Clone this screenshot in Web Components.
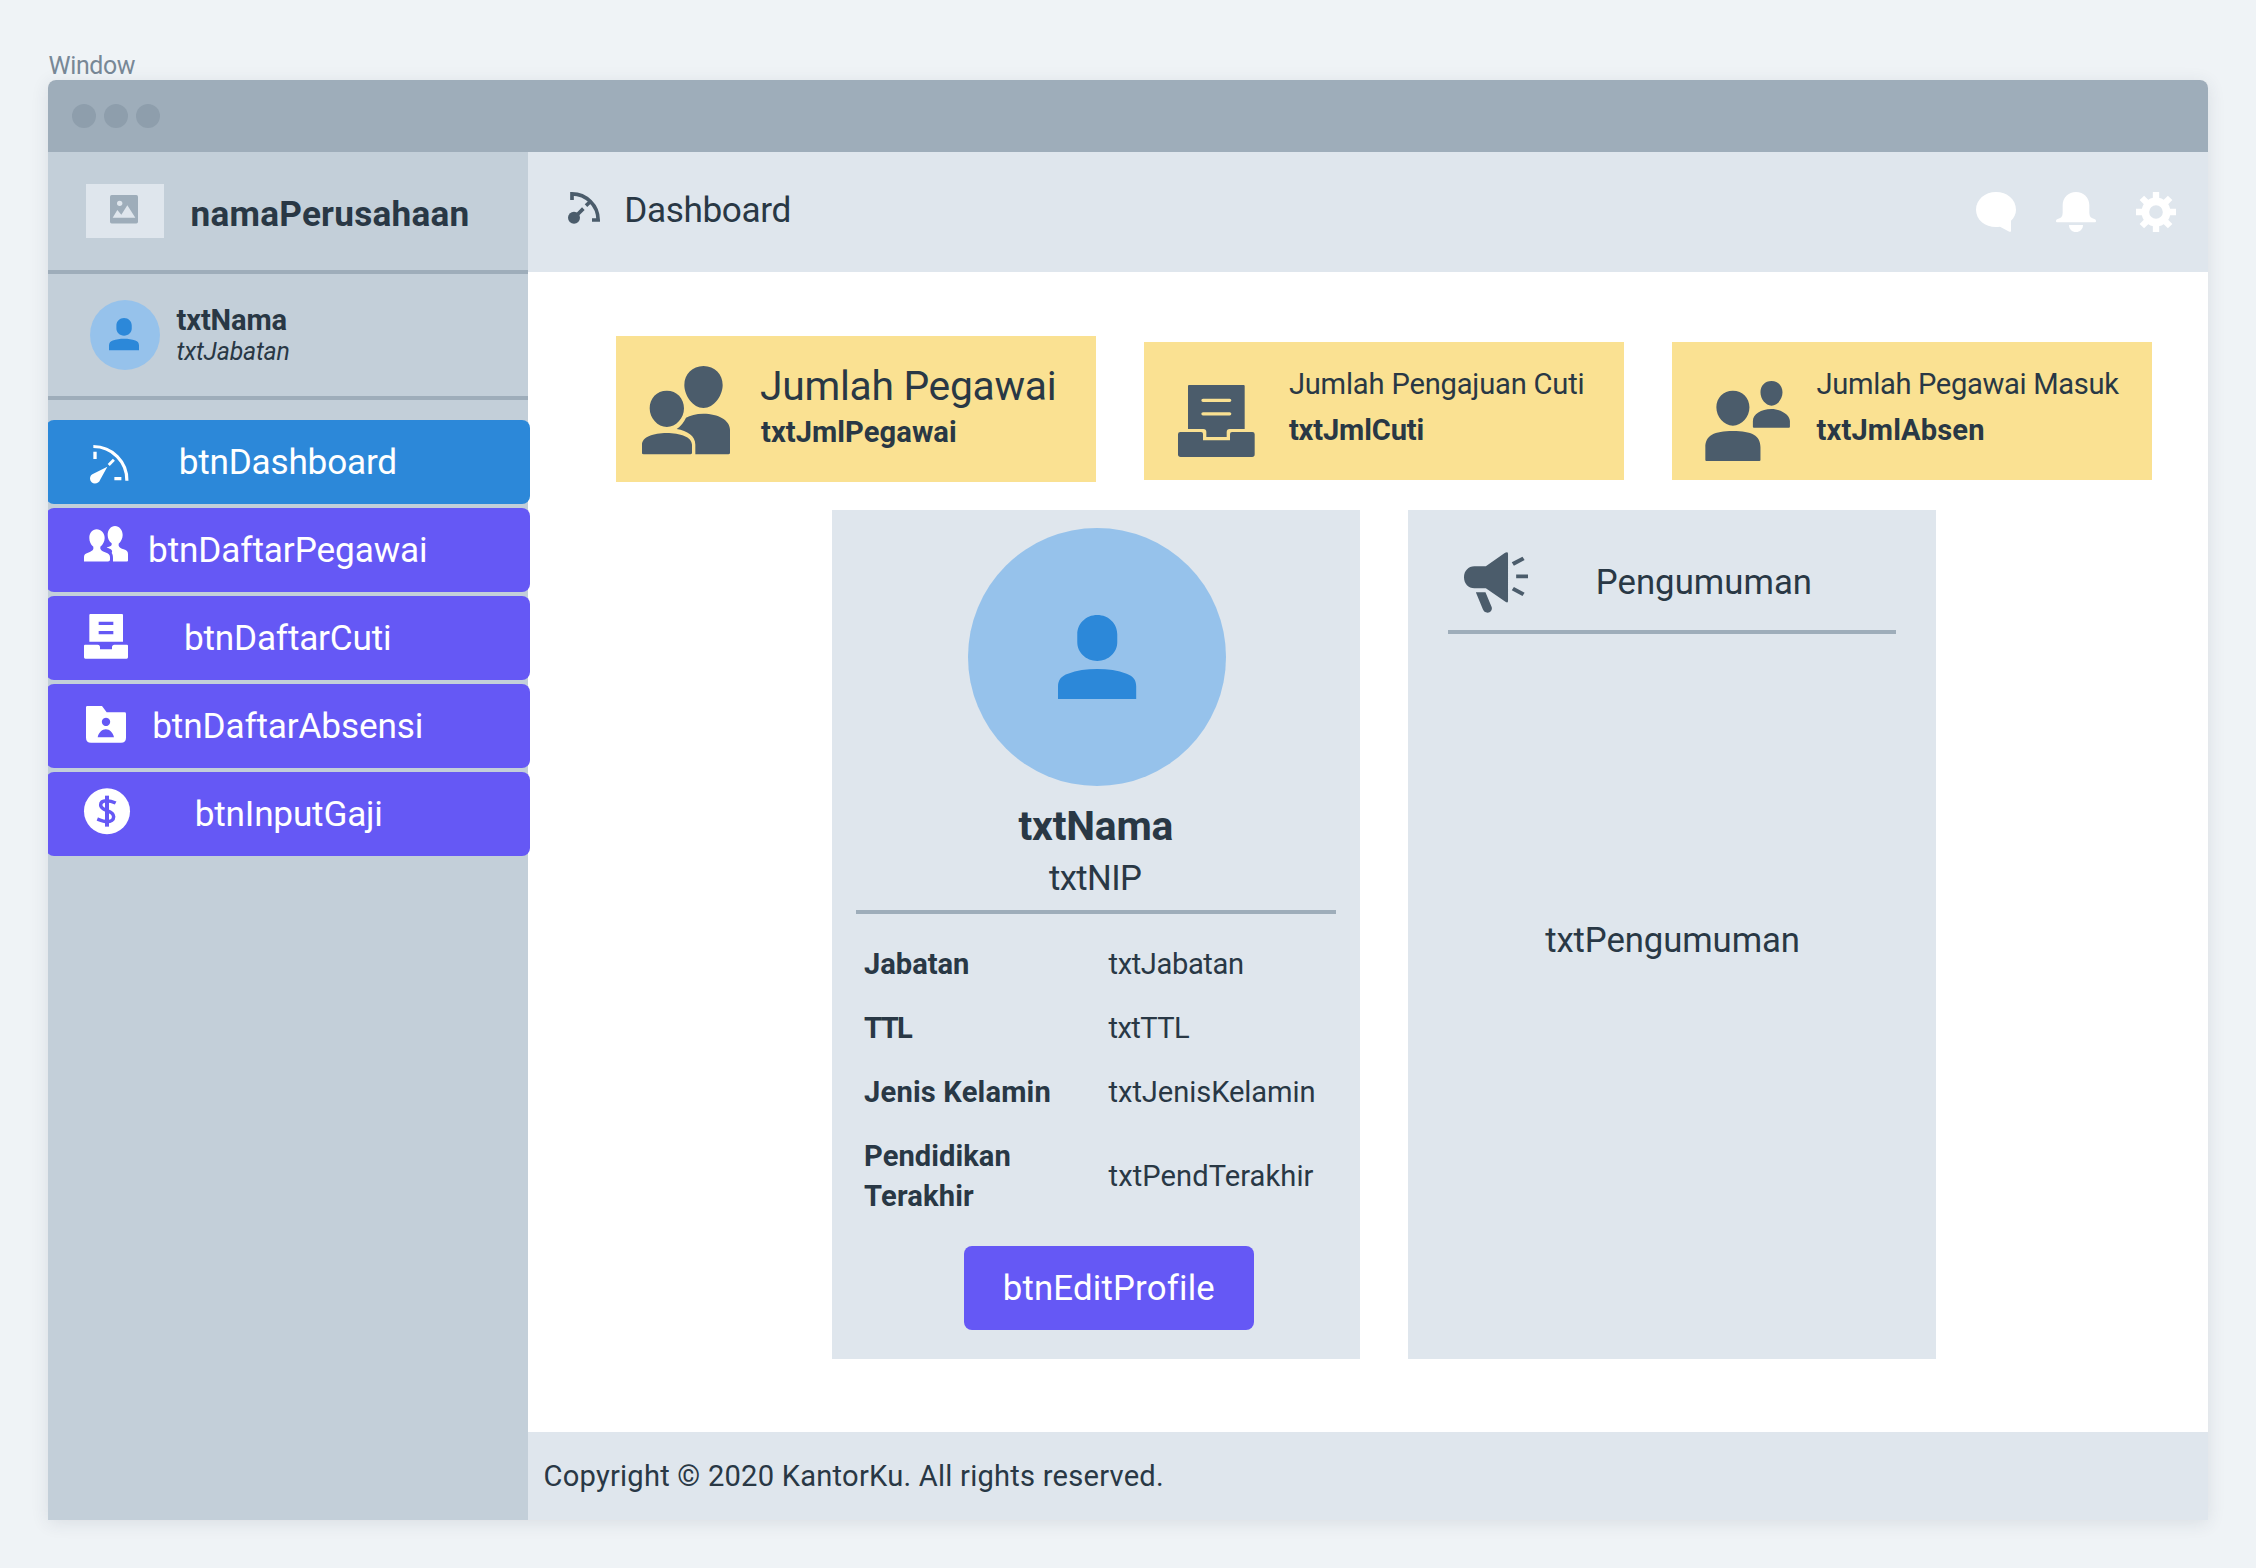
<!DOCTYPE html>
<html lang="id">
<head>
<meta charset="utf-8">
<title>Dashboard</title>
<style>
  html, body { margin: 0; height: 100%; }
  body { background: #eff3f6; color: #293845; font-family: Roboto, "Liberation Sans", sans-serif; overflow: hidden; }
</style>
</head>
<body>
<wf-page></wf-page>
<script>
const ICONS = {
  image: [28, 28.4, '240 466 84 85', '<rect x="240" y="466" width="84" height="85" rx="5" fill="#9eadba"/><g fill="#dfe6ed"><circle cx="269" cy="491" r="8"/><path d="M248 534L262 511L274 525L292 497L316 534Z"/></g>'],
  person: [78.2, 84, '666 345 219 252', '<path d="M776 345c32 0 56 26 56 58v24c0 30-24 56-56 56s-56-26-56-56v-24c0-32 24-58 56-58zM666 597v-38c0-20 10-32 28-38c24-10 52-14 82-14s58 4 82 14c18 7 27 18 27 38v38z"/>'],
  gauge: [38.4, 39, '179 136 115 117', '<path d="M189 140.5A100.500 100.500 0 0 1 289.500 243" fill="none" stroke="currentColor" stroke-width="9.500"/><path d="M189 156h10v22h-10zM252 232h21v10h-21z"/><path d="M235 196L250.500 180.500" stroke="currentColor" stroke-width="8.500"/><path d="M231 201L209.500 240C204 256 180 255 179 237C179 230 183 225 189 222.500Z"/>'],
  people: [44, 35.4, '162 377 132 106', '<path d="M178 413c0-15 9-26 22-26s24 11 24 26c0 10-5 20-13 26v6c2 6 8 8 16 11c8 3 13 7 13 14v8q0 5-6 5H162v-13c0-8 4-10 12-13c8-3 14-6 16-11v-7c-8-6-12-16-12-26z"/><path d="M233 404c0-15 9-27 22-27s23 12 23 27c0 10-5 20-12 26v6c2 6 8 8 15 11c9 3 13 7 13 14v19q0 3-3 3H249v-9c0-7-1-12-4-16c3-6 1-9-4-12c-5-2-9-3-11-5c6-1 12-3 15-7v-5c-8-6-12-15-12-25z"/>'],
  inbox: [44, 44.7, '162 643 132 134', '<path fill-rule="evenodd" d="M181 643h95q3 0 3 3v80H178v-80q0-3 3-3zM206 666v10h44v-10zM206 694v10h44v-10z"/><path d="M165 735h38c5 0 7 3 7 7v7h36v-7c0-4 3-7 7-7h38q3 0 3 3v35q0 4-4 4H166q-4 0-4-4v-35q0-3 3-3z"/>'],
  folder: [40, 36.7, '168 197 120 110', '<path fill-rule="evenodd" d="M172 197h44l14 19h54q4 0 4 4v72q0 15-15 15H183q-15 0-15-15v-91q0-4 4-4zM228 232a12.500 12.500 0 1 0 .01 0zM203 291h49c-3-14-13-24-24.500-24s-21.500 10-24.500 24z"/>'],
  dollar: [46, 46.300, '162 444 138 139', '<circle cx="231" cy="513.500" r="69"/><g fill="none" stroke="#6558f5"><path d="M231 467V560" stroke-width="12"/><path d="M257 489c-10-5-18-7-28-7c-12 0-17 6-17 13c0 9 8 13 19 17s20 9 20 18c0 9-8 15-20 15c-10 0-19-4-29-8" stroke-width="10.500"/></g>'],
  speed: [32, 32, '114 156 96 96', '<circle cx="132" cy="233.500" r="18"/><path fill="none" stroke="currentColor" stroke-width="11" d="M126 180V161.500A79 79 0 0 1 204.500 240H186M141 225L160 206M168 197L183 183"/>'],
  chat: [40, 40, '108 396 120 120', '<path d="M168 396c33 0 60 22 60 53c0 13-6 24-15 33v30q0 5-5 3l-28-15q-6 1-12 1c-33 0-60-22-60-52s27-53 60-53z"/>'],
  bell: [40, 40, '348 396 120 120', '<path d="M408 396c23 0 40 17 40 40v22c0 11 5 16 13 18q7 2 7 6v2q0 3-3 3H351q-3 0-3-3v-2q0-4 7-6c8-2 13-7 13-18v-22c0-23 17-40 40-40zM387 495h42c0 13-9 21-21 21s-21-8-21-21z"/>'],
  gear: [40, 40, '588 396 120 120', '<g fill="none" stroke="currentColor"><circle cx="648" cy="456" r="32" stroke-width="23"/><path stroke-width="19" d="M648 396v22M648 494v22M588 456h22M686 456h22M605.600 413.600l15.500 15.500M674.900 482.900l15.500 15.500M605.600 498.400l15.500-15.500M674.900 429.100l15.500-15.500"/></g>'],
  pair: [88, 88.3, '126 138 264 265', '<path d="M200.500 212c30 0 51.500 23 51.500 53s-24 56-51.500 56s-51.500-26-51.500-56s21-53 51.500-53zM310.500 138c34 0 57.500 25 57.500 57s-26 69-57.500 69s-57.500-37-57.500-69s24-57 57.500-57z"/><path d="M126 400v-26c0-23 34-35 74-35s76 12 76 35v24q0 5-5 5H131q-5 0-5-3zM286 403v-29c0-26-24-42-56-47q18-12 28-34c12-7 30-12 52-12c45 0 80 20 80 48v69q0 5-5 5z"/>'],
  tray: [76.7, 72, '173 195 230 216', '<path fill-rule="evenodd" d="M206 195h164q3 0 3 3v129h-45q-9 0-9 9v15h-61v-15q0-9-9-9h-46v-129q0-3 3-3zM248 236a5 5 0 0 0 0 10h80a5 5 0 0 0 0-10zM248 276.500a5 5 0 0 0 0 10h80a5 5 0 0 0 0-10z"/><path d="M180 336h62q6 0 6 6v19h81v-19q0-6 6-6h61q7 0 7 7v60q0 8-8 8H181q-8 0-8-8v-60q0-7 7-7z"/>'],
  staff: [85.1, 80, '190 183 247 240', '<path d="M271 212c28 0 48 21 48 50s-22 55-48 55s-48-26-48-55s20-50 48-50zM383 183c19 0 32 14 32 34s-15 40-32 40s-32-20-32-40s13-34 32-34z"/><path d="M191 420v-38c0-35 25-49 80-49s80 14 80 49v38q0 3-3 3H194q-3 0-3-3zM329 320v-17c0-20 24-36 53.500-36s54 18 54 36v17q0 3-3 3H332q-3 0-3-3z"/>'],
  horn: [64, 60.7, '200 155 173 182', '<path d="M228 198h31l52-41q8-4 8 3v142q0 7-7 2l-53-40h-31c-16 0-28-14-28-33s12-33 28-33zM232 276h26l17 45c2 9-4 16-11 16s-11-4-13-10z"/><path d="M332 191L361 174M341 228H373M332 265L361 282" fill="none" stroke="currentColor" stroke-width="11.500"/>']
};

function component(name, html, setup) {
  const template = document.createElement('template');
  template.innerHTML = '<style>:host,*{box-sizing:border-box}</style>' + html;
  customElements.define(name, class extends HTMLElement {
    connectedCallback() {
      if (this.shadowRoot) return;
      const root = this.attachShadow({ mode: 'open' });
      root.append(template.content.cloneNode(true));
      if (setup) setup(this, root);
    }
  });
}

/* Inline SVG icon; "w" and "h" override its natural size. */
component('wf-icon', `<style>:host{display:block;flex:none}svg{display:block;fill:currentColor;overflow:visible}</style><div></div>`,
  (el, root) => {
    const [w, h, box, body] = ICONS[el.getAttribute('name')];
    root.querySelector('div').innerHTML =
      `<svg width="${el.getAttribute('w') || w}" height="${el.getAttribute('h') || h}" viewBox="${box}" preserveAspectRatio="none" aria-hidden="true">${body}</svg>`;
  });

/* Single line tracked to the width "ink"; its box is as tall as the capitals. */
const ctx = document.createElement('canvas').getContext('2d');
component('fit-text', `<style>:host{display:block;flex:none;white-space:nowrap}</style><slot></slot>`,
  (el) => {
    const cap = +el.getAttribute('size');
    const size = cap / .711, ink = +el.getAttribute('ink');
    const weight = el.getAttribute('weight') || 400;
    const slant = el.hasAttribute('italic') ? 'italic' : 'normal';
    const text = el.textContent;
    ctx.font = `${slant} ${weight} ${size}px Roboto, "Liberation Sans", sans-serif`;
    ctx.letterSpacing = '0.001px';
    const m = ctx.measureText(text);
    const gap = (ink - m.actualBoundingBoxRight - m.actualBoundingBoxLeft) / (text.length - 1);
    Object.assign(el.style, { fontSize: size + 'px', fontWeight: weight, fontStyle: slant,
      height: cap + 'px', lineHeight: cap + 2.6 + 'px',
      letterSpacing: gap + 'px', width: ink + 'px', textIndent: m.actualBoundingBoxLeft - .5 + 'px' });
  });

component('wf-avatar', `<style>:host{display:flex;flex:none;border-radius:50%;background:#96c2eb;color:#2c88d9}</style><slot></slot>`);

component('nav-button', `<style>
  :host{display:grid;width:484px;height:84px;border-radius:8px;background:#6558f5;color:#fff;align-items:center;justify-items:center}
  :host([active]){background:#2c88d9}
  ::slotted(*){grid-area:1/1}
  ::slotted(wf-icon){justify-self:start;align-self:start}
  ::slotted(fit-text){margin:-1px 0 0 1px}
</style><slot></slot>`);

component('wf-sidebar', `<style>
  :host{display:flex;flex-direction:column;width:480px;flex:none;background:#c3cfd9}
  .brand{display:flex;align-items:flex-start;height:122px;border-bottom:4px solid #9eadba;padding:32px 0 0 38px}
  .logo{width:78px;height:54px;background:#dfe6ed;padding:11.500px 0 0 24px}
  .brand fit-text{margin:17px 0 0 28px}
  .user{display:flex;align-items:flex-start;height:126px;border-bottom:4px solid #9eadba;padding:26px 0 0 42px}
  .user wf-avatar{width:70px;height:70px;padding:18px 0 0 19px}
  .who{padding:9.300px 0 0 17px;display:flex;flex-direction:column;gap:12.300px}
  nav{display:flex;flex-direction:column;gap:4px;margin:20px 0 0 -2px;width:484px;clip-path:inset(0 0 0 2px)}
</style>
<div class="brand"><div class="logo"><wf-icon name="image"></wf-icon></div><fit-text size="25" ink="276" weight="700">namaPerusahaan</fit-text></div>
<div class="user"><wf-avatar><wf-icon name="person" w="30" h="32.300"></wf-icon></wf-avatar>
  <div class="who"><fit-text size="20.700" ink="110" weight="700">txtNama</fit-text><fit-text size="17.700" ink="112" italic>txtJabatan</fit-text></div></div>
<nav>
  <nav-button active><wf-icon name="gauge" style="margin:25.300px 0 0 43.700px"></wf-icon><fit-text size="25" ink="214.600" weight="450">btnDashboard</fit-text></nav-button>
  <nav-button><wf-icon name="people" style="margin:17.700px 0 0 38px"></wf-icon><fit-text size="25" ink="276" weight="450">btnDaftarPegawai</fit-text></nav-button>
  <nav-button><wf-icon name="inbox" style="margin:18.300px 0 0 38px"></wf-icon><fit-text size="25" ink="204" weight="450">btnDaftarCuti</fit-text></nav-button>
  <nav-button><wf-icon name="folder" style="margin:21.700px 0 0 40px"></wf-icon><fit-text size="25" ink="267.500" weight="450">btnDaftarAbsensi</fit-text></nav-button>
  <nav-button><wf-icon name="dollar" style="margin:16px 0 0 38px"></wf-icon><fit-text size="25" ink="184.600" weight="450" style="margin-left:3px">btnInputGaji</fit-text></nav-button>
</nav>`);

component('wf-header', `<style>
  :host{display:flex;height:120px;background:#dfe6ed;padding:40px 32px 0 40px;align-items:flex-start}
  .speed{color:#4b5c6b}
  fit-text{margin:5px auto 0 26.700px}
  .tools{display:flex;gap:40px;color:#fff}
</style>
<wf-icon class="speed" name="speed"></wf-icon><fit-text size="25" ink="163.400">Dashboard</fit-text>
<div class="tools"><wf-icon name="chat"></wf-icon><wf-icon name="bell"></wf-icon><wf-icon name="gear"></wf-icon></div>`);

component('stat-card', `<style>
  :host{display:flex;flex:none;align-items:flex-start;width:480px;height:138px;margin-top:6px;background:#fae192}
  :host([large]){height:146px;margin-top:0}
  .icon{color:#4b5c6b;display:flex}
  .text{display:flex;flex-direction:column;gap:25.300px;padding-top:31.300px}
  :host([large]) .text{gap:21.300px;padding-top:35px}
</style><div class="icon"><slot name="icon"></slot></div><div class="text"><slot></slot></div>`);

component('profile-panel', `<style>
  :host{display:flex;flex:none;flex-direction:column;align-items:center;width:528px;height:849px;background:#dfe6ed;padding-top:18px}
  wf-avatar{width:258px;height:258px;padding:87px 0 0 90px;margin-left:2px}
  .rule{width:480px;height:4px;background:#9eadba;margin-top:20.300px}
  .rows{align-self:stretch;display:grid;grid-template-columns:244.500px auto;row-gap:43.300px;padding:39.300px 0 0 32.600px;align-items:center}
  .two{display:flex;flex-direction:column;gap:19.300px}
  .btn{display:flex;justify-content:center;width:290px;height:84px;border-radius:8px;background:#6558f5;color:#fff;padding-top:29.300px;margin:40px 0 0 26px}
</style>
<wf-avatar><wf-icon name="person"></wf-icon></wf-avatar>
<fit-text size="29" ink="154" weight="700" style="margin-top:25px">txtNama</fit-text>
<fit-text size="24.700" ink="92" style="margin:25px 1px 0 0">txtNIP</fit-text>
<div class="rule"></div>
<div class="rows">
  <fit-text size="20.700" ink="104" weight="700">Jabatan</fit-text><fit-text size="20.700" ink="134.300">txtJabatan</fit-text>
  <fit-text size="20.700" ink="49" weight="700">TTL</fit-text><fit-text size="20.700" ink="80.400">txtTTL</fit-text>
  <fit-text size="20.700" ink="185.400" weight="700">Jenis Kelamin</fit-text><fit-text size="20.700" ink="206">txtJenisKelamin</fit-text>
  <div class="two"><fit-text size="20.700" ink="144.400" weight="700" style="margin-left:1px">Pendidikan</fit-text><fit-text size="20.700" ink="110" weight="700">Terakhir</fit-text></div><fit-text size="20.700" ink="205">txtPendTerakhir</fit-text>
</div>
<div class="btn"><fit-text size="24.700" ink="209.600" weight="450" style="margin-left:2px">btnEditProfile</fit-text></div>`);

component('notice-panel', `<style>
  :host{display:flex;flex:none;flex-direction:column;width:528px;height:849px;background:#dfe6ed;padding:0 40px}
  .head{display:flex;height:124px;border-bottom:4px solid #9eadba;padding:41.700px 0 0 16px;align-items:flex-start}
  .head wf-icon{color:#4b5c6b}
  .head fit-text{margin:17.600px 0 0 70.300px}
  .body{display:flex;justify-content:center;padding-top:293.300px}
</style>
<div class="head"><wf-icon name="horn"></wf-icon><fit-text size="24.700" ink="212">Pengumuman</fit-text></div>
<div class="body"><fit-text size="24.700" ink="252.600">txtPengumuman</fit-text></div>`);

component('wf-page', `<style>
  :host{display:flex;flex-direction:column;width:2256px;height:1568px;padding:56.300px 48px 48px}
  .name{color:#788896;margin:0 0 6px 1px}
  .window{display:flex;flex-direction:column;flex:none;height:1440px;background:#fff;border-radius:8px 8px 0 0;box-shadow:0 3px 18px rgba(41,56,69,.11)}
  .bar{display:flex;gap:8px;height:72px;background:#9eadba;border-radius:8px 8px 0 0;padding:24px}
  .bar i{width:24px;height:24px;border-radius:50%;background:#8e9eac}
  .split{display:flex;flex:1}
  main{flex:1;min-width:0;display:flex;flex-direction:column}
  .stats{display:flex;gap:48px;padding:64px 0 0 88px;height:238px}
  .panels{display:flex;gap:48px;padding-left:304px;flex:1}
  footer{height:88px;background:#dfe6ed;padding:33.300px 0 0 17px}
</style>
<fit-text class="name" size="17.700" ink="87.300">Window</fit-text>
<div class="window">
  <div class="bar"><i></i><i></i><i></i></div>
  <div class="split">
    <wf-sidebar></wf-sidebar>
    <main>
      <wf-header></wf-header>
      <div class="stats">
        <stat-card large><wf-icon slot="icon" name="pair" style="margin:30px 31.500px 0 26px"></wf-icon><fit-text size="29" ink="293.700">Jumlah Pegawai</fit-text><fit-text size="20.700" ink="195" weight="700">txtJmlPegawai</fit-text></stat-card>
        <stat-card><wf-icon slot="icon" name="tray" style="margin:43px 35px 0 33.700px"></wf-icon><fit-text size="20.700" ink="294.700">Jumlah Pengajuan Cuti</fit-text><fit-text size="20.700" ink="134.700" weight="700">txtJmlCuti</fit-text></stat-card>
        <stat-card><wf-icon slot="icon" name="staff" style="margin:39px 26.500px 0 33.400px"></wf-icon><fit-text size="20.700" ink="302.700">Jumlah Pegawai Masuk</fit-text><fit-text size="20.700" ink="166.700" weight="700">txtJmlAbsen</fit-text></stat-card>
      </div>
      <div class="panels"><profile-panel></profile-panel><notice-panel></notice-panel></div>
      <footer><fit-text size="20.700" ink="617.500">Copyright © 2020 KantorKu. All rights reserved.</fit-text></footer>
    </main>
  </div>
</div>`);
</script>
</body>
</html>
